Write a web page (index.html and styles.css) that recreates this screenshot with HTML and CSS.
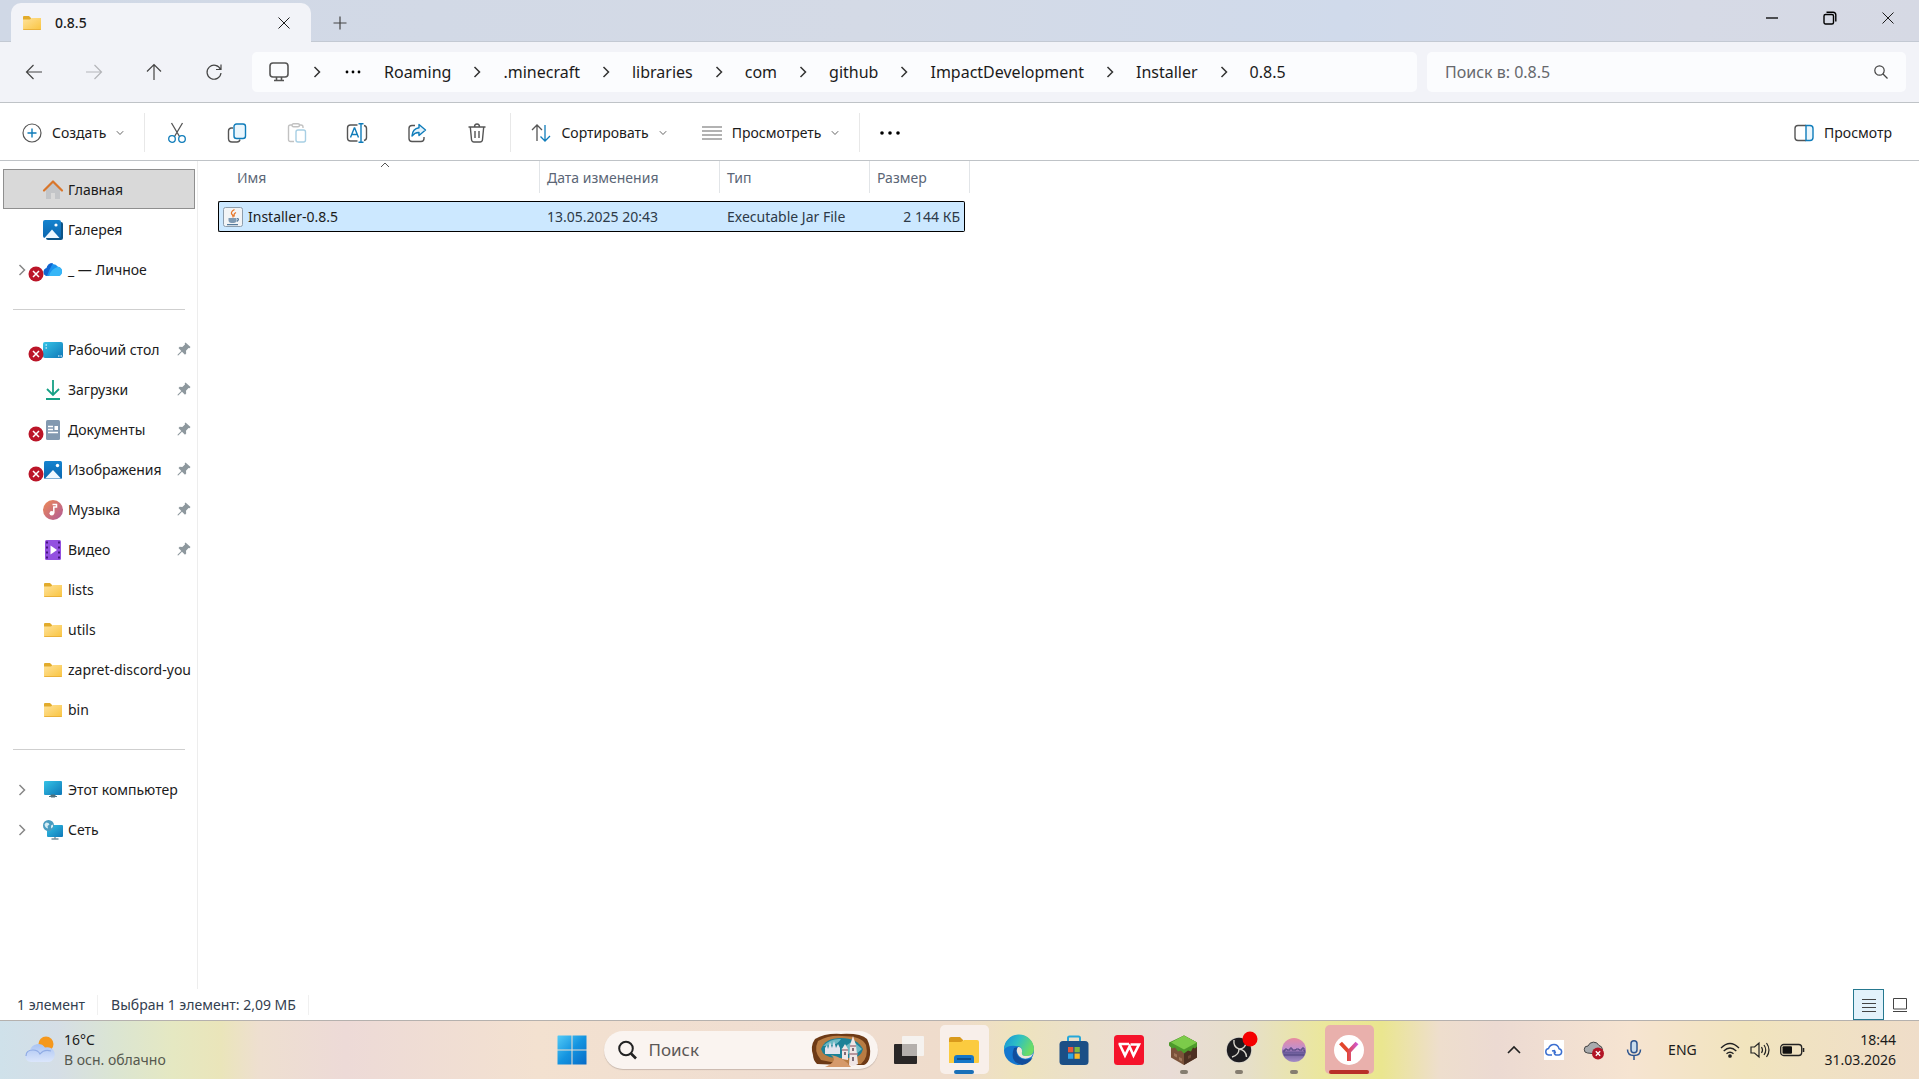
FILE: index.html
```
<!DOCTYPE html>
<html lang="ru">

<head>
    <meta charset="UTF-8">
    <meta name="viewport" content="width=device-width, initial-scale=1.0">
    <title>0.8.5</title>
    <link rel="stylesheet" href="styles.css">
</head>

<body>
    <!-- Общие значки -->
    <svg class="sprite" aria-hidden="true">
        <defs>
            <linearGradient id="gFolder" x1="0" y1="0" x2="1" y2="1">
                <stop offset="0" stop-color="#ffe29a" />
                <stop offset="1" stop-color="#f9c440" />
            </linearGradient>
            <linearGradient id="gBlue" x1="0" y1="0" x2="1" y2="1">
                <stop offset="0" stop-color="#35c3e6" />
                <stop offset="1" stop-color="#0f78b8" />
            </linearGradient>
            <linearGradient id="gPhoto" x1="0" y1="0" x2="0" y2="1">
                <stop offset="0" stop-color="#1583cf" />
                <stop offset="1" stop-color="#0b66ae" />
            </linearGradient>
            <linearGradient id="gCloud" x1="0" y1="0" x2="0" y2="1">
                <stop offset="0" stop-color="#a9c3f2" />
                <stop offset="1" stop-color="#dbe6fb" />
            </linearGradient>
        </defs>
        <symbol id="folder" viewBox="0 0 20 20">
            <path d="M1 4q0-1 1-1h5l2 2v3H1z" fill="#e2ab2b" />
            <path d="M1 6.500h7l1.500-1.500H19V16q0 1-1 1H2q-1 0-1-1z" fill="url(#gFolder)" />
            <path d="M1 16h18q0 1-1 1H2q-1 0-1-1z" fill="#eab13a" />
        </symbol>
        <symbol id="pin" viewBox="0 0 14 14">
            <path d="M8.500 .5l5 4.500-1 1.200-1-.1-2.500 2.700.2 2.700-1.200 1.200-3-3L1.200 13.500.5 13.300l.2-.8L4.300 9 1.500 6l1.200-1.200 2.600.2L8 2.500 7.700 1.500z" fill="#8e989e" />
        </symbol>
        <symbol id="chevR" viewBox="0 0 8 12">
            <path d="M1.500 1l5 5-5 5" fill="none" stroke="currentColor" stroke-width="1.500" />
        </symbol>
        <symbol id="chevD" viewBox="0 0 8 6">
            <path d="M.8 1.200L4 4.500l3.200-3.300" fill="none" stroke="currentColor" />
        </symbol>
        <symbol id="error" viewBox="0 0 16 16">
            <circle cx="8" cy="8" r="7.500" fill="#bb1528" />
            <path d="M5 5l6 6M11 5l-6 6" stroke="#fff" stroke-width="1.500" />
        </symbol>
        <symbol id="close" viewBox="0 0 14 14">
            <path d="M1.500 1.500l11 11M12.500 1.500l-11 11" stroke="currentColor" />
        </symbol>
    </svg>

    <!-- Вкладки -->
    <header class="titlebar">
        <div class="tab">
            <svg class="i20"><use href="#folder" /></svg>
            <span class="tab-title">0.8.5</span>
            <button class="icon-btn" aria-label="Закрыть вкладку"><svg class="i14"><use href="#close" /></svg></button>
        </div>
        <button class="icon-btn new-tab" aria-label="Новая вкладка">
            <svg class="i14" viewBox="0 0 14 14"><path d="M7 .5v13M.5 7h13" stroke="#444" stroke-width="1.200" /></svg>
        </button>
        <div class="window-buttons">
            <button class="win-btn" aria-label="Свернуть"><svg class="i14" viewBox="0 0 14 14"><path d="M1 7h12" stroke="#000" stroke-width="1.300" /></svg></button>
            <button class="win-btn" aria-label="Восстановить">
                <svg class="i14" viewBox="0 0 14 14" fill="none" stroke="#000" stroke-width="1.400"><rect x="1" y="3.500" width="9.500" height="9.500" rx="1.500" /><path d="M3.500 1.200h6.500q2.800 0 2.800 2.800v6.500" /></svg>
            </button>
            <button class="win-btn" aria-label="Закрыть"><svg class="i14"><use href="#close" /></svg></button>
        </div>
    </header>

    <!-- Адресная строка -->
    <nav class="navbar">
        <div class="nav-buttons">
            <button class="nav-btn" aria-label="Назад"><svg class="i18" viewBox="0 0 18 18"><path d="M17 9H1.500M8.500 2l-7 7 7 7" /></svg></button>
            <button class="nav-btn" aria-label="Вперёд" disabled><svg class="i18" viewBox="0 0 18 18"><path d="M1 9h15.500M9.500 2l7 7-7 7" /></svg></button>
            <button class="nav-btn" aria-label="Вверх"><svg class="i18" viewBox="0 0 18 18"><path d="M9 17V1.500M2 8.500l7-7 7 7" /></svg></button>
            <button class="nav-btn" aria-label="Обновить"><svg class="i18" viewBox="0 0 18 18"><path d="M15.500 6.500A7 7 0 1 0 16 10M16 1.500v5h-5" /></svg></button>
        </div>
        <div class="address">
            <svg class="i20" viewBox="0 0 20 20" fill="none" stroke="#555" stroke-width="1.600"><rect x="1" y="1" width="18" height="14" rx="3" /><path d="M7.500 15v3M12.500 15v3M5 18.500h10" /></svg>
            <svg class="chev"><use href="#chevR" /></svg>
            <button class="icon-btn" aria-label="Другие папки"><svg class="dots-sm" viewBox="0 0 16 4"><circle cx="2" cy="2" r="1.400" /><circle cx="8" cy="2" r="1.400" /><circle cx="14" cy="2" r="1.400" /></svg></button>
            <a href="#">Roaming</a>
            <svg class="chev"><use href="#chevR" /></svg>
            <a href="#">.minecraft</a>
            <svg class="chev"><use href="#chevR" /></svg>
            <a href="#">libraries</a>
            <svg class="chev"><use href="#chevR" /></svg>
            <a href="#">com</a>
            <svg class="chev"><use href="#chevR" /></svg>
            <a href="#">github</a>
            <svg class="chev"><use href="#chevR" /></svg>
            <a href="#">ImpactDevelopment</a>
            <svg class="chev"><use href="#chevR" /></svg>
            <a href="#">Installer</a>
            <svg class="chev"><use href="#chevR" /></svg>
            <a href="#">0.8.5</a>
        </div>
        <label class="search">
            <input type="text" placeholder="Поиск в: 0.8.5" aria-label="Поиск в папке">
            <svg class="i14" viewBox="0 0 14 14" fill="none" stroke="#444" stroke-width="1.200"><circle cx="5.500" cy="5.500" r="4.700" /><path d="M9 9l4.500 4.500" /></svg>
        </label>
    </nav>

    <!-- Панель команд -->
    <div class="toolbar">
        <button class="cmd">
            <svg class="i20" viewBox="0 0 20 20" fill="none"><circle cx="10" cy="10" r="9" stroke="#555" stroke-width="1.200" /><path d="M10 5.500v9M5.500 10h9" stroke="#0f7cba" stroke-width="1.400" /></svg>
            Создать
            <svg class="down"><use href="#chevD" /></svg>
        </button>
        <span class="sep"></span>
        <div class="cmd-icons">
            <button class="cmd-icon" aria-label="Вырезать">
                <svg class="i20" viewBox="0 0 20 20" fill="none" stroke-width="1.300"><path d="M4.500 0l8 13.500M15.500 0l-8 13.500" stroke="#555" /><circle cx="5" cy="16" r="3.300" stroke="#0f7cba" /><circle cx="15" cy="16" r="3.300" stroke="#0f7cba" /></svg>
            </button>
            <button class="cmd-icon" aria-label="Копировать">
                <svg class="i20" viewBox="0 0 20 20" fill="none" stroke-width="1.400"><path d="M6 5H4Q1.500 5.500 1.500 8v7.500Q1.500 19 5 19h5q2.500 0 3-2.500" stroke="#555" /><rect x="7" y="1" width="11.500" height="14.500" rx="2.500" fill="#eaf6fd" stroke="#0f7cba" /></svg>
            </button>
            <button class="cmd-icon" aria-label="Вставить" disabled>
                <svg class="i20" viewBox="0 0 20 20" fill="none" stroke-width="1.400"><path d="M7 18.500H3.500Q1.500 18.500 1.500 16.500V4q0-2 2-2H5M12 2h2q2 0 2 2v1" stroke="#c2c2c2" /><rect x="5" y=".8" width="7.500" height="3" rx="1.500" stroke="#c2c2c2" /><rect x="9" y="7" width="9.500" height="12" rx="2" stroke="#a8cfe4" /></svg>
            </button>
            <button class="cmd-icon" aria-label="Переименовать">
                <svg class="i22" viewBox="0 0 22 20" fill="none" stroke-width="1.400"><path d="M11.500 2H4.500Q1.500 2 1.500 5v10q0 3 3 3h7M18 2.500q2.500.5 2.500 3v9q0 2.500-2.500 3" stroke="#555" /><path d="M4.500 14.500L8.300 5h.4l3.800 9.500M6 11.500h5M15 1v18M12.500.7h5M12.500 19.300h5" stroke="#0f7cba" /></svg>
            </button>
            <button class="cmd-icon" aria-label="Поделиться">
                <svg class="i20" viewBox="0 0 20 20" fill="none" stroke-width="1.400" stroke-linejoin="round"><path d="M8 2.500H5Q2 2.500 2 5.500v10q0 3 3 3h9q3 0 3-3V14" stroke="#555" /><path d="M12 1.500L18.500 7 12 12.500V9.500Q8 9.200 5 13 5.500 5.500 12 4.700z" fill="#e4f3fc" stroke="#0f7cba" /></svg>
            </button>
            <button class="cmd-icon" aria-label="Удалить">
                <svg class="i20" viewBox="0 0 20 20" fill="none" stroke="#555" stroke-width="1.400"><path d="M1.500 4h17M7.500 4q0-3 2.500-3t2.500 3M3.300 4l1.200 12.500Q4.700 19 7 19h6q2.300 0 2.500-2.500L16.700 4M8 8v7M12 8v7" /></svg>
            </button>
        </div>
        <span class="sep"></span>
        <button class="cmd">
            <svg class="i20" viewBox="0 0 20 20" fill="none" stroke-width="1.300"><path d="M6 18V2M1 7l5-5 5 5" stroke="#555" /><path d="M14 2v16M9.500 13.500L14 18l5-5" stroke="#0f7cba" /></svg>
            Сортировать
            <svg class="down"><use href="#chevD" /></svg>
        </button>
        <button class="cmd cmd-view">
            <svg class="i20" viewBox="0 0 20 20" stroke="#666" stroke-width="1.200"><path d="M0 4h20M0 8h20M0 12h20M0 16h20" /></svg>
            Просмотреть
            <svg class="down"><use href="#chevD" /></svg>
        </button>
        <span class="sep"></span>
        <button class="cmd" aria-label="Ещё"><svg class="dots" viewBox="0 0 20 4"><circle cx="2" cy="2" r="1.800" /><circle cx="10" cy="2" r="1.800" /><circle cx="18" cy="2" r="1.800" /></svg></button>
        <button class="cmd preview">
            <svg class="i20" viewBox="0 0 20 20" fill="none" stroke-width="1.400"><path d="M12 2.500H4Q1 2.500 1 5.500v9q0 3 3 3h8" stroke="#555" /><path d="M12 2.500h4q3 0 3 3v9q0 3-3 3h-4z" fill="#eaf6fd" stroke="#0f7cba" /></svg>
            Просмотр
        </button>
    </div>

    <main class="explorer">
        <!-- Область навигации -->
        <aside class="sidebar">
            <a href="#" class="item active">
                <svg class="i20" viewBox="0 0 20 20"><path d="M3 9l7-7 7 7v10h-5v-6H8v6H3z" fill="#c3c5c8" /><path d="M1 10.500l9-9 9 9" fill="none" stroke="#d9762b" stroke-width="2.200" stroke-linejoin="round" stroke-linecap="round" /></svg>
                <span>Главная</span>
            </a>
            <a href="#" class="item">
                <svg class="i20" viewBox="0 0 20 20"><rect x="3" y="2" width="17" height="18" rx="2" fill="#0d5487" /><rect width="18" height="18" rx="2" fill="url(#gPhoto)" /><path d="M1.500 18L9 9.500l7.500 8.500z" fill="#eef8ff" /><circle cx="13" cy="5" r="1.600" fill="#fff" /></svg>
                <span>Галерея</span>
            </a>
            <a href="#" class="item">
                <svg class="expand"><use href="#chevR" /></svg>
                <svg class="badge"><use href="#error" /></svg>
                <svg class="i20" viewBox="0 0 20 20"><path d="M4 16a4 4 0 0 1-.5-7.800A6.500 6.500 0 0 1 15 6.800 4.700 4.700 0 0 1 15.500 16z" fill="#1b93ee" /><path d="M4 16a4 4 0 0 1-.5-7.800A6.500 6.500 0 0 1 10 3Q6 10 4 16z" fill="#1165cf" /><path d="M6 16q2-7 9-9.200A4.700 4.700 0 0 1 15.500 16z" fill="#37b6f7" /></svg>
                <span>_ — Личное</span>
            </a>
            <hr>
            <a href="#" class="item">
                <svg class="badge"><use href="#error" /></svg>
                <svg class="i20" viewBox="0 0 20 20"><rect y="2" width="20" height="16" rx="2" fill="url(#gBlue)" /><path d="M2.500 5h1.500M2.500 8h1.500M15 16h1.500M17.500 16H19" stroke="#fff" stroke-width="1.200" /></svg>
                <span>Рабочий стол</span><svg class="pin"><use href="#pin" /></svg>
            </a>
            <a href="#" class="item">
                <svg class="i20" viewBox="0 0 20 20" fill="none" stroke="#16a085" stroke-width="1.800"><path d="M10 0v15M4 9l6 6 6-6M3 19h14" /></svg>
                <span>Загрузки</span><svg class="pin"><use href="#pin" /></svg>
            </a>
            <a href="#" class="item">
                <svg class="badge"><use href="#error" /></svg>
                <svg class="i20" viewBox="0 0 20 20"><rect x="3" width="14" height="20" rx="1.500" fill="#8299b0" /><path d="M5 6.500h5M5 9.500h5M5 12.500h10" stroke="#fff" stroke-width="1.300" /><rect x="11.500" y="6" width="3.500" height="4" fill="#fff" /></svg>
                <span>Документы</span><svg class="pin"><use href="#pin" /></svg>
            </a>
            <a href="#" class="item">
                <svg class="badge"><use href="#error" /></svg>
                <svg class="i20" viewBox="0 0 20 20"><rect x="1" y="1" width="18" height="18" rx="1.500" fill="url(#gPhoto)" /><path d="M2 18.500L10 10l8 8.500z" fill="#eef8ff" /><circle cx="14.500" cy="5.500" r="1.700" fill="#fff" /></svg>
                <span>Изображения</span><svg class="pin"><use href="#pin" /></svg>
            </a>
            <a href="#" class="item">
                <svg class="i20" viewBox="0 0 20 20"><linearGradient id="gMusic" x2="1" y2="1"><stop offset="0" stop-color="#ee8a55" /><stop offset="1" stop-color="#b05a98" /></linearGradient><circle cx="10" cy="10" r="10" fill="url(#gMusic)" /><path d="M9.500 4.500h4v2.500h-2.700v6.200" fill="none" stroke="#fff" stroke-width="1.500" /><circle cx="8.800" cy="13.300" r="2.300" fill="#fff" /></svg>
                <span>Музыка</span><svg class="pin"><use href="#pin" /></svg>
            </a>
            <a href="#" class="item">
                <svg class="i20" viewBox="0 0 20 20"><rect x="2" width="16" height="20" rx="1.500" fill="#9350e0" /><path d="M4 1.500v17M16 1.500v17" stroke="#46157f" stroke-width="2" stroke-dasharray="2 3" /><path d="M7.500 5.500l6.500 4.500-6.500 4.500z" fill="#fff" /></svg>
                <span>Видео</span><svg class="pin"><use href="#pin" /></svg>
            </a>
            <a href="#" class="item"><svg class="i20"><use href="#folder" /></svg><span>lists</span></a>
            <a href="#" class="item"><svg class="i20"><use href="#folder" /></svg><span>utils</span></a>
            <a href="#" class="item"><svg class="i20"><use href="#folder" /></svg><span>zapret-discord-you</span></a>
            <a href="#" class="item"><svg class="i20"><use href="#folder" /></svg><span>bin</span></a>
            <hr>
            <a href="#" class="item">
                <svg class="expand"><use href="#chevR" /></svg>
                <svg class="i20" viewBox="0 0 20 20"><rect x="1" y="1" width="18" height="14" rx="1" fill="url(#gBlue)" /><path d="M8 15h4v2H8zM6 16.500h8" fill="#53727f" stroke="#53727f" /></svg>
                <span>Этот компьютер</span>
            </a>
            <a href="#" class="item">
                <svg class="expand"><use href="#chevR" /></svg>
                <svg class="i20" viewBox="0 0 20 20"><rect x="4" y="5" width="16" height="12" rx="1" fill="url(#gBlue)" /><path d="M8.500 19h7M12 17v2" stroke="#78909c" stroke-width="1.400" /><circle cx="5.500" cy="5.500" r="5.500" fill="#4a9cc0" /><path d="M3 2.500q3 0 3.500 2L4.500 6 5 8.500Q2 8 1.500 4.500zM8 5.500l2-1v2.500l-2 1.500z" fill="#d4ecf4" /></svg>
                <span>Сеть</span>
            </a>
        </aside>

        <!-- Список файлов -->
        <section class="files">
            <table class="file-table">
                <thead>
                    <tr>
                        <th class="col-name">Имя<svg class="sort" viewBox="0 0 10 6"><path d="M1 5l4-4 4 4" fill="none" stroke="#555" /></svg></th>
                        <th class="col-date">Дата изменения</th>
                        <th class="col-type">Тип</th>
                        <th class="col-size">Размер</th>
                    </tr>
                </thead>
                <tbody>
                    <tr>
                        <td>
                            <div class="file-name">
                                <svg class="i20" viewBox="0 0 20 20"><rect x=".5" y=".5" width="19" height="19" rx="2" fill="#f2f4f6" stroke="#8d9dac" /><path d="M11.500 2.500q-5 3-2 5.500 1 1.200.3 2.500M13 5.500q-3 1.500-1.500 4" fill="none" stroke="#e8772a" stroke-width="1.300" /><path d="M5.500 11h8v2q0 3-3 3h-2q-3 0-3-3z" fill="#7f9ab3" /><path d="M14 11.500q3 .2-.3 3M4 17.700h11" fill="none" stroke="#557a9c" stroke-width="1.200" /></svg>
                                Installer-0.8.5
                            </div>
                        </td>
                        <td>13.05.2025 20:43</td>
                        <td>Executable Jar File</td>
                        <td class="size">2 144 КБ</td>
                    </tr>
                </tbody>
            </table>
        </section>
    </main>

    <!-- Строка состояния -->
    <footer class="statusbar">
        <span class="status">1 элемент</span>
        <span class="status">Выбран 1 элемент: 2,09 МБ</span>
        <div class="view-modes">
            <button class="mode active" aria-label="Таблица"><svg class="i14" viewBox="0 0 14 14" stroke="#444"><path d="M0 1.500h14M0 5.500h14M0 9.500h14M0 13.500h14" /></svg></button>
            <button class="mode" aria-label="Крупные значки"><svg class="i14" viewBox="0 0 14 14" fill="none" stroke="#444"><path d="M.5.500h13v10.500H.5zM0 13.500h14" /></svg></button>
        </div>
    </footer>

    <!-- Панель задач -->
    <div class="taskbar">
        <button class="weather">
            <svg class="weather-icon" viewBox="0 0 32 28"><circle cx="22" cy="8" r="7.500" fill="#f5981d" /><path d="M7 26a6 6 0 0 1-1-11.800A8.500 8.500 0 0 1 21 11.500 7 7 0 0 1 25.500 26z" fill="url(#gCloud)" /><path d="M2 20q0-6 7-6 5 0 7 4 4-5 11-3" fill="none" stroke="#8fabe4" stroke-width="1.200" /></svg>
            <span class="weather-text"><b>16°C</b><span>В осн. облачно</span></span>
        </button>

        <div class="apps">
            <button class="app" aria-label="Пуск">
                <svg class="i30" viewBox="0 0 30 30"><linearGradient id="gWin" gradientUnits="userSpaceOnUse" x1="0" y1="0" x2="30" y2="30"><stop offset="0" stop-color="#55ccf7" /><stop offset=".5" stop-color="#1494e0" /><stop offset="1" stop-color="#0769c6" /></linearGradient><path d="M1 .5h13.500v14H.5V1zM15.500.500H29.500v14h-14zM.5 15.500h14v14H.5zM15.500 15.500h14v14h-14z" fill="url(#gWin)" /></svg>
            </button>
            <label class="task-search">
                <svg class="i20" viewBox="0 0 20 20" fill="none" stroke="#222" stroke-width="2"><circle cx="9" cy="8.500" r="6.800" /><path d="M14 13.500l5 5" stroke-width="2.600" /></svg>
                <input type="text" placeholder="Поиск" aria-label="Поиск">
                <svg class="castle" viewBox="0 0 60 34">
                    <path d="M4 6Q14 0 30 1 50 0 56 6q4 8 3 16-1 8-6 10H30L6 31q-4-4-4-9Q-1 13 4 6z" fill="#6d3a16" />
                    <path d="M7 8Q18 2 31 3q20 0 24 9 3 12-5 19H30L10 27Q2 18 7 8z" fill="#b87c43" />
                    <path d="M10 16Q14 5 30 5t22 11q-2 8-10 9H24q-12-1-14-9z" fill="#1c8197" />
                    <path d="M12 13Q20 5 30 6q-3 5-8 6zM30 16l12-8 9 8-9 8z" fill="#6db9c4" />
                    <path d="M14 21v-6l2-3 1 4 2-7 2 6 2-7 2 7 2-4 2 4v6z" fill="#e3e4ee" />
                    <path d="M14 34q14-6 6-12 12 2 20 12z" fill="#d69a6b" />
                    <path d="M31 26V16l3-5 3 5v11zM38 32l1-20 3-9 3 9 2 19q-4 3-9 1z" fill="#f0e6e6" />
                    <path d="M31 17h6M39 13h6M38 21h9" stroke="#a57e86" stroke-width="1.500" />
                    <path d="M34 19v3M42 15v3M42 24v4" stroke="#584653" stroke-width="1.500" />
                </svg>
            </label>
            <button class="app" aria-label="Представление задач">
                <svg class="i30" viewBox="0 0 30 30"><rect y="9" width="23" height="20" rx="1" fill="#2a2727" /><rect x="8" y="1" width="22" height="20" rx="1" fill="#f5f3f2" opacity=".92" /><path d="M8 9h15v12H8z" fill="#b4afac" /></svg>
            </button>
            <button class="app open" aria-label="Проводник">
                <svg class="i30" viewBox="0 0 30 30"><path d="M0 4q0-2 2-2h9l3 3v5H0z" fill="#d99a1c" /><path d="M0 7h12l3-2h13q2 0 2 2v20q0 1-1 1H0z" fill="#fbcb3f" /><path d="M5 28v-5q0-3 3-3h14q3 0 3 3v5z" fill="#1577c8" /><path d="M8 24h14" stroke="#0c508f" stroke-width="2" /></svg>
                <i class="mark wide"></i>
            </button>
            <button class="app" aria-label="Edge">
                <svg class="i30" viewBox="0 0 30 30"><linearGradient id="gEdge" x2="1" y2=".4"><stop offset="0" stop-color="#168edb" /><stop offset=".5" stop-color="#2dbfc4" /><stop offset="1" stop-color="#6bdc66" /></linearGradient><circle cx="15" cy="15" r="15" fill="#1477cf" /><path d="M0 15A15 15 0 0 1 30 14q0 7-7.500 7Q17 21 18 17q1-6-6-6Q3 10 0 15z" fill="url(#gEdge)" /><path d="M10 13q-5 14 8 17 7-1 10.500-7Q19 27 14 21q-3-4 0-9z" fill="#124e9c" /><path d="M14 12q4.500 0 4 5-1 4 4.500 4 5 0 7-3-1 2-2.500 4Q20 26 15 21q-4-5-1-9z" fill="#f0e5d9" /></svg>
            </button>
            <button class="app" aria-label="Microsoft Store">
                <svg class="i30" viewBox="0 0 30 30"><path d="M9 8V3q0-1.500 1.500-1.500h9Q21 1.500 21 3v5" fill="none" stroke="#26a7d9" stroke-width="2" /><rect x=".5" y="6" width="29" height="24" rx="3.500" fill="#1b4f86" /><path d="M9 12h5.300v5.300H9z" fill="#e8573a" /><path d="M15.500 12h5.300v5.300h-5.300z" fill="#7eb93f" /><path d="M9 18.500h5.300v5.300H9z" fill="#2da4e5" /><path d="M15.500 18.500h5.300v5.300h-5.300z" fill="#f8bb28" /></svg>
            </button>
            <button class="app" aria-label="WPS Office">
                <svg class="i30" viewBox="0 0 30 30"><rect width="30" height="30" rx="3.500" fill="#f5132b" /><path d="M4.500 9h10.500M6 10l5 10.500 4.500-9 4 9L25 9.500h-8.500" fill="none" stroke="#fff" stroke-width="2.600" /></svg>
            </button>
            <button class="app" aria-label="Minecraft">
                <svg class="i30" viewBox="0 0 30 30"><path d="M2 7.500l13-7 13 7v15l-13 7.500-13-7.500z" fill="#7b523a" /><path d="M15 14.500l13-7v15L15 30z" fill="#4d3022" /><path d="M15 .5l13 7v4l-2 2-2-1-2 4-3-1-4 3-3-3-3 1-3-4-3 1-3-3V7.500z" fill="#4c9a2b" /><path d="M15 .5l13 7-13 7-13-7z" fill="#7ccb4a" /><path d="M5 18l3 1.500v3L5 21zM10 22l3 1.500v3L10 25z" fill="#a0765a" /><path d="M19 21l3-1.500v3L19 24z" fill="#6d4a37" /></svg>
                <i class="mark"></i>
            </button>
            <button class="app" aria-label="OBS Studio">
                <svg class="i30" viewBox="0 0 30 30"><circle cx="15" cy="15" r="13" fill="#d5d2ca" /><circle cx="15" cy="15" r="12.200" fill="#1d1c20" /><path d="M10 5q-1 7 5 9 6 0 7-6M15 14q0 6-7 8M15 14q7 1 7.500 8" fill="none" stroke="#d5d2ca" stroke-width="1.400" /><circle cx="26" cy="4" r="7.500" fill="#f50000" /></svg>
                <i class="mark"></i>
            </button>
            <button class="app" aria-label="Закат">
                <svg class="i30" viewBox="0 0 30 30"><linearGradient id="gSun" x2="0" y2="1"><stop offset="0" stop-color="#e88b9e" /><stop offset=".45" stop-color="#bf8fcf" /><stop offset=".6" stop-color="#6a5a99" /><stop offset="1" stop-color="#a78ec8" /></linearGradient><circle cx="15" cy="15" r="12" fill="url(#gSun)" /><path d="M4 16h2v-2h2v1h3v-2h2v2h4v-1h3v1h3v-2h2v3h1M5 20h20" fill="none" stroke="#4a417b" /></svg>
                <i class="mark"></i>
            </button>
            <button class="app alert" aria-label="Яндекс Браузер">
                <svg class="i30" viewBox="0 0 30 30"><linearGradient id="gYa" gradientUnits="userSpaceOnUse" x1="5" y1="0" x2="24" y2="0"><stop offset=".4" stop-color="#e2462c" /><stop offset="1" stop-color="#cf5adf" /></linearGradient><circle cx="15" cy="15" r="15" fill="#fff" /><path d="M6.500 8l8 8.500M23 8l-8 8.500V26" fill="none" stroke="url(#gYa)" stroke-width="4" /></svg>
                <i class="mark red"></i>
            </button>
        </div>

        <div class="tray">
            <button class="tray-btn" aria-label="Скрытые значки"><svg class="i14" viewBox="0 0 14 14"><path d="M1 10l6-6 6 6" fill="none" stroke="#222" stroke-width="1.600" /></svg></button>
            <button class="tray-btn" aria-label="Облако"><svg class="i20" viewBox="0 0 20 20"><rect width="20" height="20" fill="#fff" /><path d="M8 15H4.500a3.300 3.300 0 0 1 0-6.500Q6 4.500 10 4.500t5 4.200a3.200 3.200 0 0 1 0 6.300h-3q-2.500-1-1.500-4M8 11l2.500-.5 1 2.500" fill="none" stroke="#3b6fd0" stroke-width="1.500" /></svg></button>
            <button class="tray-btn" aria-label="OneDrive"><svg class="i20" viewBox="0 0 20 20"><path d="M3.500 13a3.500 3.500 0 0 1 .5-7A6 6 0 0 1 15 5.500q3 .5 3.500 4L13 14z" fill="#a9abad" stroke="#444" /><circle cx="14" cy="13.500" r="6" fill="#b21425" /><path d="M11.800 11.300l4.400 4.400M16.200 11.300l-4.400 4.400" stroke="#fff" stroke-width="1.300" /></svg></button>
            <button class="tray-btn" aria-label="Микрофон"><svg class="i20" viewBox="0 0 20 20" fill="none" stroke="#2d5590" stroke-width="1.500"><rect x="7" y=".8" width="6" height="12" rx="3" fill="#c9dcec" /><path d="M3.500 9.500q0 6 6.500 6t6.500-6M10 15.500V20" /></svg></button>
            <button class="tray-btn lang">ENG</button>
            <button class="tray-btn network" aria-label="Сеть, звук и батарея">
                <svg class="i20" viewBox="0 0 20 20" fill="none" stroke="#222" stroke-width="1.300"><path d="M1 8Q10-1 19 8M3.700 11q6.300-6 12.600 0M6.500 13.800q3.500-3.200 7 0" /><circle cx="10" cy="16" r="1.200" fill="#222" /></svg>
                <svg class="i20" viewBox="0 0 20 20" fill="none" stroke="#222" stroke-width="1.200"><path d="M1 7h3.500L9 3v14l-4.500-4H1zM11.500 7q2 3 0 6M14 5q3.500 5 0 10M16.500 3q5 7 0 14" /></svg>
                <svg class="battery" viewBox="0 0 25 14"><rect x=".7" y="1.500" width="21" height="11" rx="3" fill="none" stroke="#222" stroke-width="1.300" /><rect x="2.500" y="3.300" width="9.500" height="7.500" rx="1" fill="#111" /><path d="M23.500 5v4" stroke="#222" stroke-width="1.600" /></svg>
            </button>
            <button class="clock"><time>18:44</time><time>31.03.2026</time></button>
        </div>
    </div>
</body>

</html>
```

FILE: styles.css
```
* {
    box-sizing: border-box;
}

body {
    margin: 0;
    height: 100vh;
    display: flex;
    flex-direction: column;
    overflow: hidden;
    background-color: #fff;
    color: #1b1b1b;
    font-family: "Noto Sans", "Open Sans", sans-serif;
    font-size: 14px;
    line-height: 20px;
}

button,
input {
    font: inherit;
    color: inherit;
    border: none;
    background: none;
    padding: 0;
}

a {
    color: inherit;
    text-decoration: none;
}

svg {
    flex: none;
    display: block;
    overflow: visible;
}

.sprite {
    position: absolute;
    width: 0;
    height: 0;
}

.i14 { width: 14px; height: 14px; }
.i18 { width: 18px; height: 18px; }
.i20 { width: 20px; height: 20px; }
.i22 { width: 22px; height: 20px; }
.i30 { width: 30px; height: 30px; }

.icon-btn {
    display: flex;
    align-items: center;
    justify-content: center;
}

/* Заголовок окна */
.titlebar {
    display: flex;
    flex: none;
    height: 42px;
    padding: 0 2px 0 11px;
    background: linear-gradient(90deg, #d0d8e6, #d4dae6 45%, #d0daeb 70%, #d6dae6 88%, #d6d9e4);
    box-shadow: inset 0 -1px #c3c9d3;
}

.tab {
    display: flex;
    align-items: center;
    width: 300px;
    margin-top: 3px;
    padding: 0 20px 0 11px;
    background-color: #f2f3f8;
    border-radius: 10px 10px 0 0;
}

.tab-title {
    flex: 1;
    margin-left: 13px;
    font-weight: 500;
}

.new-tab {
    width: 58px;
    padding-top: 4px;
}

.window-buttons {
    display: flex;
    margin-left: auto;
}

.win-btn {
    display: flex;
    justify-content: center;
    align-items: center;
    width: 58px;
    height: 36px;
}

/* Навигация */
.navbar {
    display: flex;
    flex: none;
    align-items: center;
    gap: 10px;
    height: 61px;
    padding: 0 13px 0 4px;
    background-color: #f2f3f8;
    border-bottom: 1px solid #bfc3c7;
}

.nav-buttons {
    display: flex;
    width: 240px;
    margin-right: -2px;
}

.nav-btn {
    display: flex;
    align-items: center;
    justify-content: center;
    width: 60px;
    height: 40px;
}

.nav-btn svg {
    fill: none;
    stroke: #444;
    stroke-width: 1.2;
}

.nav-btn:disabled svg {
    stroke: #b4b5b9;
}

.address,
.search {
    display: flex;
    align-items: center;
    height: 40px;
    background-color: #fbfcfe;
    border-radius: 5px;
    font-size: 16px;
}

.address {
    flex: 1148;
    padding-left: 17px;
}

.chev {
    width: 8px;
    height: 12px;
    margin: 0 22px;
    color: #333;
}

.address > .i20 + .chev {
    margin: 0 24px;
}

.dots-sm {
    width: 16px;
    height: 4px;
    margin-right: 23px;
}

.search {
    flex: 443;
    padding: 0 18px;
}

.search input {
    flex: 1;
    min-width: 0;
    outline: none;
}

.search input::placeholder {
    color: #66686c;
    opacity: 1;
}

/* Панель команд */
.toolbar {
    display: flex;
    flex: none;
    align-items: center;
    height: 58px;
    padding: 2px 27px 0 22px;
    border-bottom: 1px solid #bfc3c7;
}

.cmd {
    display: flex;
    align-items: center;
    gap: 10px;
    height: 40px;
    white-space: nowrap;
}

.down {
    width: 8px;
    height: 6px;
    color: #666;
}

.sep {
    width: 1px;
    height: 39px;
    margin: 0 20px;
    background-color: #e8e8e8;
}

.cmd-icons {
    display: flex;
    margin: 0 -17px 0 -18px;
}

.cmd-icon {
    display: flex;
    align-items: center;
    justify-content: center;
    width: 60px;
    height: 40px;
}

.cmd-view {
    margin-left: 35px;
}

.dots {
    width: 20px;
    height: 4px;
}

.preview {
    margin-left: auto;
}

/* Проводник */
.explorer {
    display: flex;
    flex: 1;
    min-height: 0;
}

.sidebar {
    flex: none;
    width: 198px;
    padding: 8px 2px 0 3px;
    border-right: 1px solid #ededed;
}

.item {
    position: relative;
    display: flex;
    align-items: center;
    height: 40px;
    padding: 2px 0 0 40px;
    white-space: nowrap;
    overflow: hidden;
}

.item.active {
    padding-left: 39px;
    background-color: #d9d9d9;
    border: 1px solid #8f8f8f;
}

.item span {
    margin-left: 5px;
}

.expand {
    position: absolute;
    left: 15px;
    top: 15px;
    width: 8px;
    height: 12px;
    color: #888;
}

.badge {
    position: absolute;
    left: 25px;
    top: 17px;
    width: 16px;
    height: 16px;
}

.pin {
    position: absolute;
    right: 4px;
    top: 13px;
    width: 14px;
    height: 14px;
}

.sidebar hr {
    height: 1px;
    margin: 20px 10px 19px 10px;
    border: none;
    background-color: #cfcfcf;
}

.files {
    flex: 1;
    padding-left: 20px;
}

.file-table {
    width: 747px;
    table-layout: fixed;
    border-collapse: separate;
    border-spacing: 0;
}

.file-table th {
    position: relative;
    height: 32px;
    padding: 2px 12px 0;
    text-align: left;
    font-weight: 400;
    color: #5b6676;
}

.file-table .col-name {
    width: 317px;
    padding-left: 19px;
}

.col-date { width: 180px; }
.col-type { width: 150px; }
.col-size { width: 100px; }

/* Разделители столбцов */
.file-table th::after {
    content: "";
    position: absolute;
    top: 0;
    right: -5px;
    width: 1px;
    height: 32px;
    background-color: #e2e5e8;
}

.sort {
    position: absolute;
    left: 51%;
    top: 1px;
    width: 10px;
    height: 6px;
}

.file-table thead::after {
    content: "";
    display: block;
    height: 8px;
}

.file-table td {
    height: 31px;
    padding: 1px 12px 0;
    background-color: #cce8ff;
    border-top: 1px solid #000;
    border-bottom: 1px solid #000;
    color: #2d3a48;
}

.file-table td:first-child {
    padding-left: 4px;
    border-left: 1px solid #000;
    border-radius: 2px 0 0 2px;
    color: #1b1b1b;
}

.file-table td:last-child {
    padding-right: 4px;
    border-right: 1px solid #000;
    border-radius: 0 2px 2px 0;
    text-align: right;
}

.file-name {
    display: flex;
    align-items: center;
    gap: 5px;
}

/* Строка состояния */
.statusbar {
    display: flex;
    flex: none;
    align-items: center;
    height: 31px;
    padding: 0 4px 0 17px;
    color: #33404f;
}

.status {
    padding-right: 12px;
    margin-right: 13px;
    border-right: 1px solid #f0f0f0;
}

.view-modes {
    display: flex;
    margin-left: auto;
}

.mode {
    display: flex;
    align-items: center;
    justify-content: center;
    width: 31px;
    height: 31px;
}

.mode.active {
    background-color: #e3f2fb;
    border: 1px solid #26788f;
}

/* Панель задач */
.taskbar {
    display: grid;
    grid-template-columns: 1fr auto 1fr;
    flex: none;
    height: 59px;
    border-top: 1px solid #b5b1ae;
    background: linear-gradient(90deg, #cfe1ea 0, #d5dee6 3%, #dbe5d2 6%, #e5e8c2 9%, #eae5ba 11.5%, #eedfd0 13.5%, #eddad7 18%, #f3e1d0 28%, #efddd1 42%, #efdccb 50%, #eee3bd 53%, #eadfcd 57%, #e9dcd6 61%, #e6dfc9 65%, #ebe79c 69%, #eae68f 72%, #eedecd 75%, #ecdad2 78%, #f6e4d1 85%, #f1e4bd 91%, #f0e2c2 94%, #efddc9 100%);
}

.weather {
    display: flex;
    align-items: center;
    justify-self: start;
    padding: 0 0 1px 24px;
    gap: 8px;
    text-align: left;
}

.weather-icon {
    width: 32px;
    height: 28px;
}

.weather-text b,
.weather-text span {
    display: block;
    font-weight: 400;
}

.weather-text span {
    color: #55584e;
}

.apps {
    display: flex;
    padding-left: 2px;
}

.app {
    position: relative;
    display: flex;
    align-items: center;
    justify-content: center;
    width: 49px;
    height: 49px;
    margin: 4px 3px;
    border-radius: 5px;
}

.app.open {
    background-color: #f8efea;
}

.app.alert {
    background-color: #e9b0ac;
}

/* Индикатор запущенного приложения */
.mark {
    position: absolute;
    left: 50%;
    bottom: 0;
    width: 8px;
    height: 4px;
    border-radius: 2px;
    background-color: #857d70;
    transform: translateX(-50%);
}

.mark.wide {
    width: 20px;
    background-color: #1a70b8;
}

.mark.red {
    width: 40px;
    background-color: #b83028;
}

.task-search {
    display: flex;
    align-items: center;
    width: 274px;
    height: 38px;
    margin: 10px 4px 0;
    padding: 0 7px 0 13px;
    border-radius: 20px;
    background-color: #faf4f0;
    box-shadow: 0 1px 1px #c9b9ae;
}

.task-search input {
    flex: 1;
    min-width: 0;
    padding-left: 12px;
    font-size: 17px;
    outline: none;
}

.task-search input::placeholder {
    color: #5c5856;
    opacity: 1;
}

.castle {
    width: 60px;
    height: 34px;
}

.tray {
    display: flex;
    align-items: center;
    justify-content: flex-end;
    padding: 0 23px 1px 0;
}

.tray-btn {
    display: flex;
    align-items: center;
    justify-content: center;
    width: 40px;
    height: 40px;
}

.lang {
    width: 56px;
}

.network {
    width: auto;
    gap: 10px;
    padding: 0 10px;
}

.battery {
    width: 25px;
    height: 14px;
}

.clock {
    padding-left: 9px;
    text-align: right;
}

.clock time {
    display: block;
}
```
